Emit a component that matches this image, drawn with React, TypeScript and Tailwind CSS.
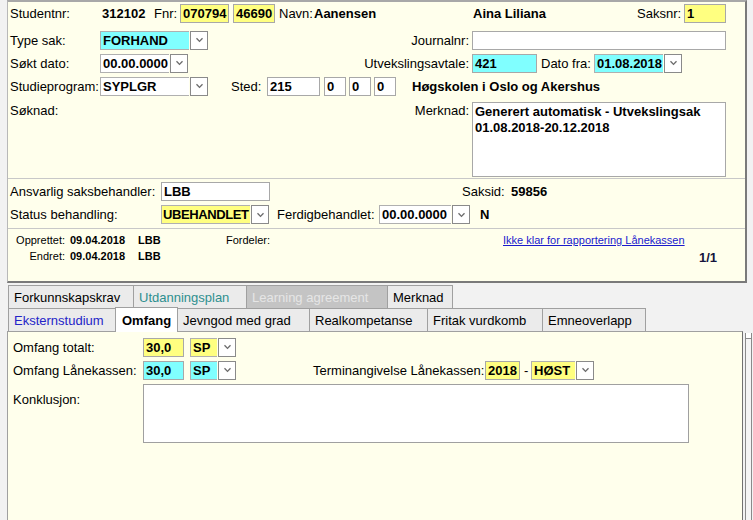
import React from "react";

const Chev = () => (
  <svg width="9" height="6" viewBox="0 0 9 6">
    <polyline points="1.5,1.2 4.5,4.4 7.5,1.2" fill="none" stroke="#6b6b6b" strokeWidth="1.3" />
  </svg>
);

function Box({ cls, children }: { cls: string; children?: React.ReactNode }) {
  return (
    <div
      className={`h-[19px] border border-[#a8a8a8] flex items-center px-[2px] font-bold text-[13px] leading-none overflow-hidden whitespace-nowrap ${cls}`}
    >
      {children}
    </div>
  );
}

function Sel({ cls, fill, children }: { cls: string; fill: string; children?: React.ReactNode }) {
  return (
    <div className={`h-[19px] flex ${cls}`}>
      <div
        className={`flex-1 flex items-center px-[2px] font-bold leading-none whitespace-nowrap overflow-hidden border-y border-l border-[#b0b0b0] ${fill}`}
      >
        {children}
      </div>
      <div className="w-[18px] shrink-0 ml-[1px] flex items-center justify-center border border-[#8a8a8a] bg-white">
        <Chev />
      </div>
    </div>
  );
}

function Tab({ cls, bg, children }: { cls: string; bg?: string; children: React.ReactNode }) {
  return (
    <div
      className={`h-full border-t border-l border-[#a0a0a0] flex items-center pl-[5px] whitespace-nowrap ${bg ?? "bg-[#ebebeb]"} ${cls}`}
    >
      {children}
    </div>
  );
}

export default function App() {
  return (
    <div className="w-[753px] h-[520px] overflow-hidden bg-[#f2f2f2] pl-[7px] text-[13px] leading-[15px] text-[#000] font-['Liberation_Sans',Arial,sans-serif]">
      {/* Top panel */}
      <div className="w-[740px] h-[283px] border-l border-l-[#b8b8b8] border-t-2 border-t-[#a8a8a8] border-r-2 border-r-[#7a7a7a] border-b-2 border-b-[#7a7a7a] bg-[#ffffec] flex flex-col">
        <div className="h-[22px] pl-[2px] flex items-center *:shrink-0">
          <span className="w-[92px]">Studentnr:</span>
          <span className="w-[52px] font-bold">312102</span>
          <span className="w-[26px]">Fnr:</span>
          <Box cls="w-[49px] bg-[#ffff80]">070794</Box>
          <Box cls="w-[42px] ml-[4px] bg-[#ffff80]">46690</Box>
          <span className="w-[35px] ml-[4px]">Navn:</span>
          <span className="w-[159px] font-bold">Aanensen</span>
          <span className="w-[164px] font-bold">Aina Liliana</span>
          <span className="w-[47px]">Saksnr:</span>
          <Box cls="w-[42px] bg-[#ffff80]">1</Box>
        </div>

        <div className="mt-[6px] h-[20px] pl-[2px] flex items-center *:shrink-0">
          <span className="w-[90px]">Type sak:</span>
          <Sel cls="w-[108px]" fill="bg-[#80ffff]">FORHAND</Sel>
          <span className="w-[261px] text-right">Journalnr:</span>
          <Box cls="w-[254px] ml-[3px] bg-white"> </Box>
        </div>

        <div className="mt-[3px] h-[20px] pl-[2px] flex items-center *:shrink-0">
          <span className="w-[90px]">Søkt dato:</span>
          <Sel cls="w-[88px]" fill="bg-white">00.00.0000</Sel>
          <span className="w-[281px] text-right">Utvekslingsavtale:</span>
          <Box cls="w-[65px] ml-[3px] bg-[#80ffff]">421</Box>
          <span className="w-[53px] ml-[4px]">Dato fra:</span>
          <Sel cls="w-[88px]" fill="bg-[#80ffff]">01.08.2018</Sel>
        </div>

        <div className="mt-[3px] h-[20px] pl-[2px] flex items-center *:shrink-0">
          <span className="w-[90px]">Studieprogram:</span>
          <Sel cls="w-[108px]" fill="bg-white">SYPLGR</Sel>
          <span className="w-[36px] ml-[23px]">Sted:</span>
          <Box cls="w-[53px] bg-white">215</Box>
          <Box cls="w-[22px] ml-[4px] bg-white">0</Box>
          <Box cls="w-[22px] ml-[3px] bg-white">0</Box>
          <Box cls="w-[22px] ml-[3px] bg-white">0</Box>
          <span className="ml-[16px] font-bold">Høgskolen i Oslo og Akershus</span>
        </div>

        <div className="mt-[6px] h-[75px] pl-[2px] flex items-start *:shrink-0">
          <span className="w-[394px] pt-[1px]">Søknad:</span>
          <span className="w-[65px] text-right pt-[1px]">Merknad:</span>
          <div className="w-[254px] ml-[3px] h-[75px] border border-[#a8a8a8] bg-white font-bold px-[2px] pt-[1px] leading-[16px]">
            Generert automatisk - Utvekslingsak
            <br />
            01.08.2018-20.12.2018
          </div>
        </div>

        <div className="mt-[1px] border-t border-[#c8c8c8]" />

        <div className="mt-[2px] h-[20px] pl-[2px] flex items-center *:shrink-0">
          <span className="w-[151px]">Ansvarlig saksbehandler:</span>
          <Box cls="w-[109px] bg-white">LBB</Box>
          <span className="w-[49px] ml-[192px]">Saksid:</span>
          <span className="font-bold">59856</span>
        </div>

        <div className="mt-[3px] h-[21px] pl-[2px] flex items-center *:shrink-0">
          <span className="w-[151px]">Status behandling:</span>
          <Sel cls="w-[108px]" fill="bg-[#ffff80] tracking-[-0.4px] !px-[1px]">UBEHANDLET</Sel>
          <span className="w-[102px] ml-[8px]">Ferdigbehandlet:</span>
          <Sel cls="w-[91px]" fill="bg-white">00.00.0000</Sel>
          <span className="ml-[10px] font-bold">N</span>
        </div>

        <div className="mt-[3px] border-t border-[#c8c8c8]" />

        <div className="mt-[3px] h-[16px] pl-[2px] flex items-center text-[11px] leading-[16px] *:shrink-0">
          <span className="w-[55px] text-right">Opprettet:</span>
          <span className="w-[68px] ml-[5px] font-bold">09.04.2018</span>
          <span className="w-[88px] font-bold">LBB</span>
          <span className="w-[277px]">Fordeler:</span>
          <a className="text-[#1a1acc] underline cursor-pointer">Ikke klar for rapportering Lånekassen</a>
        </div>
        <div className="h-[16px] pl-[2px] flex items-center text-[11px] leading-[16px] *:shrink-0">
          <span className="w-[55px] text-right">Endret:</span>
          <span className="w-[68px] ml-[5px] font-bold">09.04.2018</span>
          <span className="w-[88px] font-bold">LBB</span>
          <span className="ml-[473px] mt-[3px] text-[13px] font-bold text-[#14143c]">1/1</span>
        </div>
      </div>

      {/* Tabs */}
      <div className="mt-[2px] ml-[1px] h-[23px] flex *:shrink-0">
        <Tab cls="w-[125px]">Forkunnskapskrav</Tab>
        <Tab cls="w-[113px] text-[#2e8f8f]">Utdanningsplan</Tab>
        <Tab cls="w-[141px] text-[#e6e6e6]" bg="bg-[#c4c4c4]">
          Learning agreement
        </Tab>
        <Tab cls="w-[66px] border-r">Merknad</Tab>
      </div>
      <div className="ml-[1px] h-[23px] flex items-end *:shrink-0 relative z-10">
        <Tab cls="w-[107px] text-[#2424c8]">Eksternstudium</Tab>
        <div className="w-[63px] h-[25px] -mb-[1px] border-t border-l border-r border-[#a0a0a0] bg-white flex items-center pl-[6px] font-bold">
          Omfang
        </div>
        <Tab cls="w-[131px] border-l-0 pl-[3px]">Jevngod med grad</Tab>
        <Tab cls="w-[118px]">Realkompetanse</Tab>
        <Tab cls="w-[115px]">Fritak vurdkomb</Tab>
        <Tab cls="w-[104px] border-r">Emneoverlapp</Tab>
      </div>

      {/* Content */}
      <div className="flex">
        <div className="w-[736px] h-[189px] border-t border-l border-r border-[#a0a0a0] border-r-[#707070] bg-[#ffffec] pl-[5px] pt-[5px] flex flex-col">
          <div className="h-[20px] flex items-center *:shrink-0">
            <span className="w-[130px]">Omfang totalt:</span>
            <Box cls="w-[41px] bg-[#ffff80]">30,0</Box>
            <Sel cls="w-[46px] ml-[6px]" fill="bg-[#ffff80]">SP</Sel>
          </div>
          <div className="mt-[3px] h-[20px] flex items-center *:shrink-0">
            <span className="w-[130px]">Omfang Lånekassen:</span>
            <Box cls="w-[41px] bg-[#80ffff]">30,0</Box>
            <Sel cls="w-[46px] ml-[6px]" fill="bg-[#80ffff]">SP</Sel>
            <span className="w-[172px] ml-[77px]">Terminangivelse Lånekassen:</span>
            <Box cls="w-[35px] bg-[#ffff80]">2018</Box>
            <span className="w-[7px] ml-[4px]">-</span>
            <Sel cls="w-[63px]" fill="bg-[#ffff80]">HØST</Sel>
          </div>
          <div className="mt-[4px] flex items-start *:shrink-0">
            <span className="w-[130px] pt-[8px]">Konklusjon:</span>
            <div className="w-[546px] h-[59px] border border-[#a0a0a0] bg-white" />
          </div>
        </div>
        <div className="w-[7px] h-[189px] mt-[2px] ml-[2px] border-l border-r border-[#8a8a8a] bg-[#f4f4f4]">
          <div className="h-[6px] border-b border-[#8a8a8a] bg-white" />
        </div>
      </div>
    </div>
  );
}
